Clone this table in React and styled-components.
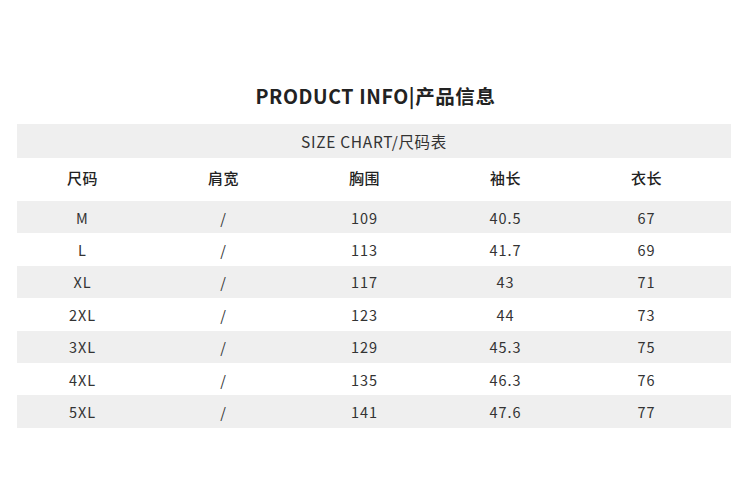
import React from 'react'
import styled, { createGlobalStyle } from 'styled-components'

const GlobalStyle = createGlobalStyle`
  html, body {
    margin: 0;
    padding: 0;
    background: #ffffff;
  }
  body {
    font-family: "Noto Sans CJK SC", "Noto Sans", sans-serif;
    color: #333333;
  }
`

const Page = styled.div`
  width: 750px;
  height: 500px;
  box-sizing: border-box;
  padding: 82px 19px 0 17px;
`

const Title = styled.h1`
  margin: 0;
  height: 28px;
  line-height: 28px;
  text-align: center;
  font-size: 19.5px;
  font-weight: 700;
  color: #222222;
  letter-spacing: 0.6px;
  padding-left: 3px;
`

const Table = styled.div`
  margin-top: 14px;
  display: flex;
  flex-direction: column;
`

const Caption = styled.div`
  height: 34px;
  line-height: 34px;
  background: #efefef;
  text-align: center;
  font-size: 15.5px;
  color: #333333;
  letter-spacing: 0.7px;
`

const Row = styled.div`
  height: ${({ $height }) => $height}px;
  background: ${({ $shaded }) => ($shaded ? '#efefef' : '#ffffff')};
  display: flex;
  align-items: center;
  padding-bottom: ${({ $lift }) => $lift || 0}px;
  box-sizing: border-box;
`

const Cells = styled.div`
  margin-left: -5px;
  display: grid;
  grid-template-columns: repeat(5, 141px);
`

const Cell = styled.span`
  text-align: center;
  font-size: ${({ $head }) => ($head ? '15px' : '14.5px')};
  font-weight: ${({ $head }) => ($head ? 500 : 400)};
  color: ${({ $head }) => ($head ? '#222222' : '#333333')};
  letter-spacing: ${({ $head }) => ($head ? '0.5px' : '1px')};
`

const head = ['尺码', '肩宽', '胸围', '袖长', '衣长']

const rows = [
  ['M', '/', '109', '40.5', '67'],
  ['L', '/', '113', '41.7', '69'],
  ['XL', '/', '117', '43', '71'],
  ['2XL', '/', '123', '44', '73'],
  ['3XL', '/', '129', '45.3', '75'],
  ['4XL', '/', '135', '46.3', '76'],
  ['5XL', '/', '141', '47.6', '77'],
]

const App = () => {
  return (
    <Page>
      <GlobalStyle />
      <Title>PRODUCT INFO|产品信息</Title>
      <Table>
        <Caption>SIZE CHART/尺码表</Caption>
        <Row $height={43} $lift={5}>
          <Cells>
            {head.map((h) => (
              <Cell key={h} $head>{h}</Cell>
            ))}
          </Cells>
        </Row>
        {rows.map((r, i) => (
          <Row key={r[0]} $height={32.4} $shaded={i % 2 === 0}>
            <Cells>
              {r.map((v, j) => (
                <Cell key={j}>{v}</Cell>
              ))}
            </Cells>
          </Row>
        ))}
      </Table>
    </Page>
  )
}

export default App
